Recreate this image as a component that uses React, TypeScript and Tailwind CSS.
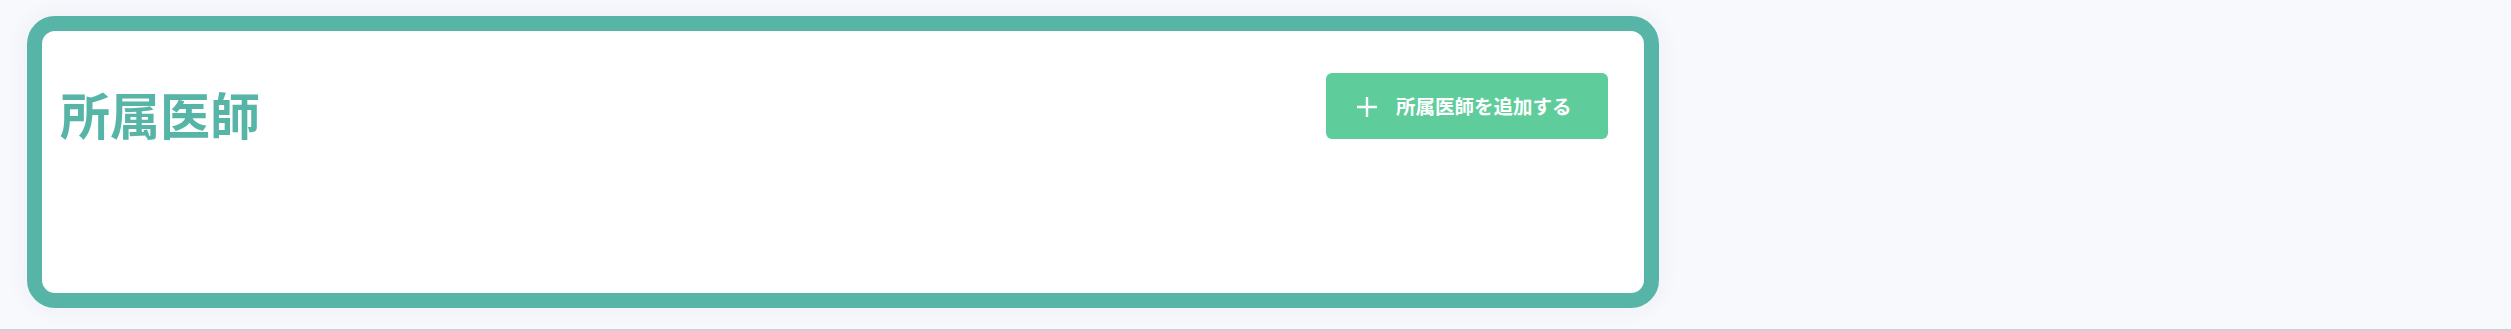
export default function App() {
  return (
    <div
      className="min-h-[331px] w-full bg-[#f8f9fd] border-b-2 border-[#d0d0d3] pt-[16px] pl-[27px] pb-[21px]"
      style={{ fontFamily: '"Noto Sans CJK JP", "Noto Sans", sans-serif' }}
    >
      <div className="w-[1632px] h-[292px] rounded-[28px] border-[15px] border-[#57b5a8] bg-white shadow-[0_0_24px_rgba(40,50,90,0.06)]">
        <div className="flex items-start justify-between pt-[42px] pl-[18px] pr-[36px]">
          <h2 className="mt-[15px] text-[50px] leading-none font-bold text-[#57b5a8]">
            所属医師
          </h2>
          <button className="flex h-[66px] w-[282px] items-center rounded-[6px] bg-[#5ecd9b] pl-[30px] text-white">
            <svg
              width="22"
              height="22"
              viewBox="0 0 22 22"
              className="mt-[2px] shrink-0"
            >
              <path
                d="M11 1v20M1 11h20"
                stroke="currentColor"
                strokeWidth="2.4"
                fill="none"
              />
            </svg>
            <span className="ml-[18px] text-[19.5px] leading-none font-bold">
              所属医師を追加する
            </span>
          </button>
        </div>
      </div>
    </div>
  );
}
